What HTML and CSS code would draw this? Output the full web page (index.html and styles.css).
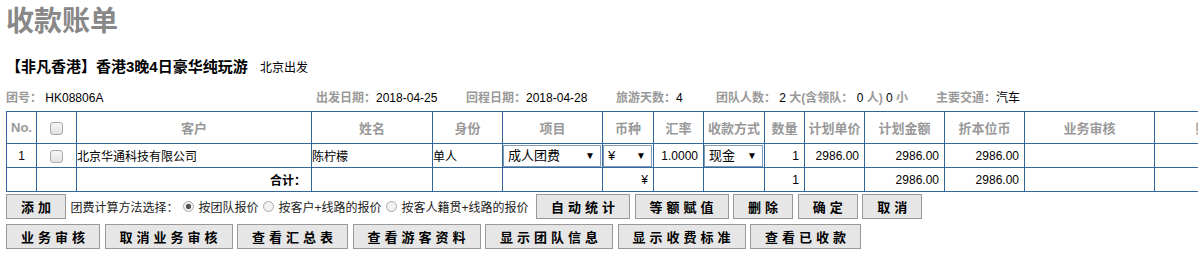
FILE: index.html
```html
<!DOCTYPE html>
<html lang='zh-CN'>
<head>
	<meta charset='UTF-8'>
	<title>收款账单</title>
	<link rel="stylesheet" href="styles.css">
</head>
<body>
<div class='bill'>
	<h1 class='bill__title'>收款账单</h1>

	<div class='tour'>
		<span class='tour__name'>【非凡香港】香港3晚4日豪华纯玩游</span>
		<span class='tour__from'>北京出发</span>
	</div>

	<div class='tour-info'>
		<span><b>团号：</b> HK08806A</span>
		<span><b>出发日期：</b>2018-04-25</span>
		<span><b>回程日期：</b>2018-04-28</span>
		<span><b>旅游天数：</b>4</span>
		<span><b>团队人数：</b> 2 <b>大(含领队：</b> 0 <b>人)</b> 0 <b>小</b></span>
		<span><b>主要交通：</b>汽车</span>
	</div>

	<table class='bill-table'>
		<colgroup>
			<col style='width:30px'>
			<col style='width:40px'>
			<col style='width:235px'>
			<col style='width:121px'>
			<col style='width:70px'>
			<col style='width:100px'>
			<col style='width:51px'>
			<col style='width:50px'>
			<col style='width:61px'>
			<col style='width:40px'>
			<col style='width:60px'>
			<col style='width:80px'>
			<col style='width:80px'>
			<col style='width:130px'>
			<col style='width:134px'>
		</colgroup>
		<thead>
			<tr>
				<th>No.</th>
				<th><input type='checkbox' class='check'></th>
				<th>客户</th>
				<th>姓名</th>
				<th>身份</th>
				<th>项目</th>
				<th>币种</th>
				<th>汇率</th>
				<th>收款方式</th>
				<th>数量</th>
				<th>计划单价</th>
				<th>计划金额</th>
				<th>折本位币</th>
				<th>业务审核</th>
				<th>财务审核</th>
			</tr>
		</thead>
		<tbody>
			<tr>
				<td class='center'>1</td>
				<td class='center'><input type='checkbox' class='check'></td>
				<td>北京华通科技有限公司</td>
				<td>陈柠檬</td>
				<td>单人</td>
				<td class='cell-select'>
					<span class='select'><select><option>成人团费</option></select></span>
				</td>
				<td class='cell-select'>
					<span class='select'><select><option>¥</option></select></span>
				</td>
				<td class='num'>1.0000</td>
				<td class='cell-select'>
					<span class='select'><select><option>现金</option></select></span>
				</td>
				<td class='num'>1</td>
				<td class='num'>2986.00</td>
				<td class='num'>2986.00</td>
				<td class='num'>2986.00</td>
				<td></td>
				<td></td>
			</tr>
			<tr>
				<td></td>
				<td></td>
				<td class='num total'>合计：</td>
				<td></td>
				<td></td>
				<td></td>
				<td class='num'>¥</td>
				<td></td>
				<td></td>
				<td class='num'>1</td>
				<td></td>
				<td class='num'>2986.00</td>
				<td class='num'>2986.00</td>
				<td></td>
				<td></td>
			</tr>
		</tbody>
	</table>

	<div class='actions'>
		<button class='btn'>添加</button>
		<span class='calc'>
			团费计算方法选择：
			<label><input type='radio' name='calc' class='radio' checked>按团队报价</label>
			<label><input type='radio' name='calc' class='radio'>按客户+线路的报价</label>
			<label><input type='radio' name='calc' class='radio'>按客人籍贯+线路的报价</label>
		</span>
		<button class='btn'>自动统计</button>
		<button class='btn'>等额赋值</button>
		<button class='btn'>删除</button>
		<button class='btn'>确定</button>
		<button class='btn'>取消</button>
	</div>
	<div class='actions'>
		<button class='btn'>业务审核</button>
		<button class='btn'>取消业务审核</button>
		<button class='btn'>查看汇总表</button>
		<button class='btn'>查看游客资料</button>
		<button class='btn'>显示团队信息</button>
		<button class='btn'>显示收费标准</button>
		<button class='btn'>查看已收款</button>
	</div>
</div>
</body>
</html>
```

FILE: styles.css
```css
body {
    margin: 0;
    padding: 0 6px;
    font-family: Arial, "Liberation Sans", "Noto Sans CJK SC", sans-serif;
    font-size: 12px;
    color: #000;
    overflow: hidden;
}

.bill__title {
    margin: 0;
    padding-top: 5px;
    font-size: 28px;
    line-height: 34px;
    font-weight: bold;
    color: #888;
}

.tour {
    margin-top: 18px;
    line-height: 20px;
}

.tour__name {
    font-size: 15px;
    font-weight: bold;
}

.tour__from {
    margin-left: 9px;
    font-size: 12px;
}

.tour-info {
    display: grid;
    grid-template-columns: 310px 150px 150px 100px 220px auto;
    margin-top: 12px;
    font-size: 12px;
    line-height: 16px;
}

.tour-info b {
    color: #999;
}

.bill-table {
    margin-top: 5px;
    width: 1282px;
    table-layout: fixed;
    border-collapse: collapse;
}

.bill-table th,
.bill-table td {
    border: 1px solid #336699;
    padding: 0;
    white-space: nowrap;
    overflow: hidden;
}

.bill-table th {
    height: 31px;
    font-size: 13px;
    font-weight: bold;
    color: #999;
}

.bill-table td {
    height: 23px;
}

.center {
    text-align: center;
}

.num {
    text-align: right;
    padding-right: 5px !important;
}

.total {
    font-weight: bold;
}

.check {
    appearance: none;
    width: 13px;
    height: 13px;
    margin: 0;
    vertical-align: middle;
    border: 1px solid #a9a9a9;
    border-radius: 3px;
    background: linear-gradient(#f6f6f6, #e2e2e2);
}

.select {
    position: relative;
    display: block;
    height: 22px;
    margin: 0 1px 0 0;
    border: 1px solid #7f9db9;
    box-sizing: border-box;
    background: #fff;
}

.select select {
    appearance: none;
    width: 100%;
    height: 100%;
    border: 0;
    padding: 0 0 0 4px;
    background: transparent;
    font-family: Arial, "Liberation Sans", "Noto Sans CJK SC", sans-serif;
    font-size: 13px;
    color: #000;
}

.select::after {
    content: '▼';
    position: absolute;
    right: 5px;
    top: 4px;
    font-size: 10px;
    pointer-events: none;
}

.actions {
    display: flex;
    align-items: center;
    gap: 4.5px;
    margin-top: 2px;
}

.actions + .actions {
    margin-top: 5px;
}

.btn {
    height: 25px;
    padding: 0 10px 0 14px;
    border: 1px solid #999;
    background: #e6e6e6;
    font-family: "Noto Sans CJK SC", sans-serif;
    font-size: 13px;
    font-weight: bold;
    letter-spacing: 4px;
    color: #000;
}

.calc {
    display: flex;
    align-items: center;
    margin-right: 3px;
    font-size: 12px;
    color: #222;
}

.calc label {
    display: flex;
    align-items: center;
}

.radio {
    appearance: none;
    width: 11px;
    height: 11px;
    margin: 0 5px 0 4px;
    border: 1px solid #aaa;
    border-radius: 50%;
    background: #f2f2f2;
}

.radio:checked {
    background: radial-gradient(circle, #555 0 2.5px, #f2f2f2 3px);
}
```
